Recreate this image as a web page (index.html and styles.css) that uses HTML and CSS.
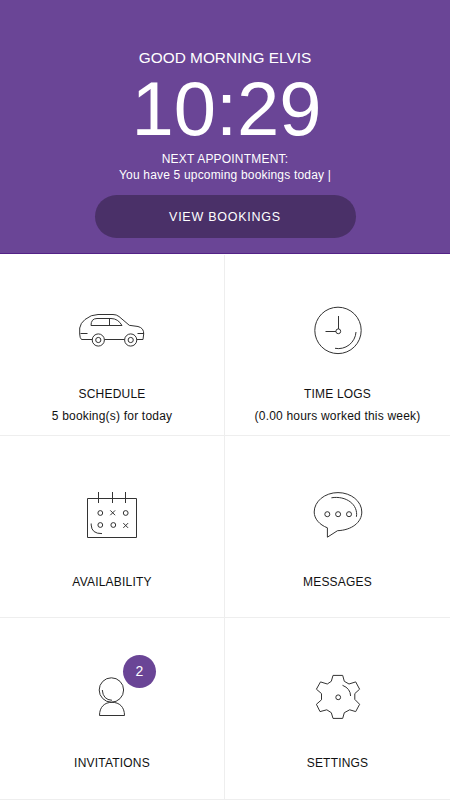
FILE: index.html
```html
<!DOCTYPE html>
<html lang="en">

<head>
    <meta charset="UTF-8">
    <title>Dashboard</title>
    <link rel="stylesheet" href="styles.css">
</head>

<body>
    <header>
        <h1>GOOD MORNING ELVIS</h1>
        <div class="clock">10:29</div>
        <p class="next">NEXT APPOINTMENT:</p>
        <p class="upcoming">You have 5 upcoming bookings today |</p>
        <button type="button">VIEW BOOKINGS</button>
    </header>

    <main>
        <section class="with-info">
            <svg viewBox="0 0 84 66">
                <path d="M22.2 42.5H11.5Q9.8 41 9.7 37V31Q10.5 26 15 22.5Q21 17.5 28 17.5H43Q46.5 17.5 49 19.5L59.3 28.3L68 29.5Q74 31 73.7 37L73 42.5H66.9M34.5 42.5H54.6" />
                <path d="M21 28.5Q21 21.5 27 21.5H41Q48 21.5 52 28.5ZM39.5 21.5V28.5M10.5 36.5H17.5M67.5 36.5H74" />
                <circle cx="28.3" cy="43" r="6.1" />
                <circle cx="28.3" cy="43" r="2.6" />
                <circle cx="60.7" cy="43" r="6.1" />
                <circle cx="60.7" cy="43" r="2.6" />
            </svg>
            <h2>SCHEDULE</h2>
            <p>5 booking(s) for today</p>
        </section>

        <section class="with-info">
            <svg viewBox="0 0 84 66">
                <circle cx="43" cy="33.4" r="23.2" />
                <circle cx="43.3" cy="34.3" r="2.4" />
                <path d="M43.5 19V32M30.5 34.5H41M61 35A17.7 17.7 0 0 1 40 51.3" />
            </svg>
            <h2>TIME LOGS</h2>
            <p>(0.00 hours worked this week)</p>
        </section>

        <section>
            <svg viewBox="0 0 84 66">
                <path d="M17.5 20.5H66.5V59.5H17.5ZM28.5 14V25M42.5 14V25M55.5 14V25" />
                <circle cx="30.3" cy="35" r="2.4" />
                <circle cx="55.7" cy="35" r="2.4" />
                <circle cx="30.3" cy="47" r="2.4" />
                <circle cx="43.3" cy="47" r="2.4" />
                <path d="M40.3 32.4L45.1 37.2M45.1 32.4L40.3 37.2M53.3 45.1L58.1 49.9M58.1 45.1L53.3 49.9" />
                <path d="M21.2 45.5V47Q21.5 55.8 32 55.6" />
            </svg>
            <h2>AVAILABILITY</h2>
        </section>

        <section>
            <svg viewBox="0 0 84 66">
                <path d="M32.4 49.8C24.5 46.8 19.2 40.8 19.2 34C19.2 23.4 29.8 14.6 43 14.6S66.8 23.4 66.8 34C66.8 44.5 56.5 52.2 42.5 52.7L32.4 59.2Z" />
                <path d="M36.4 19.8C51 17.4 63.5 26.5 61.4 38.8" />
                <circle cx="32.3" cy="36.2" r="2.5" />
                <circle cx="43.1" cy="36.2" r="2.5" />
                <circle cx="54" cy="36.2" r="2.5" />
            </svg>
            <h2>MESSAGES</h2>
        </section>

        <section class="last-row">
            <svg viewBox="0 0 84 66">
                <circle cx="41.4" cy="30" r="12.2" />
                <path d="M29.5 55.5C29.5 47 34.5 42.3 42 42.3S54.5 47 54.5 55.5Z" />
                <path d="M32.3 30Q33 39.8 42 40.3" />
            </svg>
            <span class="badge">2</span>
            <h2>INVITATIONS</h2>
        </section>

        <section class="last-row">
            <svg viewBox="0 0 84 66">
                <path d="M38 15.4H47.7L49.3 21.3L54 24L60.7 21.9L64.6 29.2L59.8 33.6V39.4L64.6 44.3L60.7 51.6L54.7 49.8L49.3 52.7L47.7 58.4H38L36.3 52.7L31.8 49.8L25 51.6L21.4 44.3L26.5 39.8V33.6L21.4 29.2L25.5 21.9L32.3 24L36.3 21.3Z" />
                <circle cx="43.2" cy="37.3" r="2.4" />
                <path d="M47.5 25.3Q55.5 28.5 55.6 36" />
            </svg>
            <h2>SETTINGS</h2>
        </section>
    </main>
</body>

</html>
```
FILE: styles.css
```css
body {
    margin: 0;
    font-family: "Liberation Sans", Arial, sans-serif;
    font-size: 12px;
    color: #111;
    background: #fff;
}

h1, h2, p {
    margin: 0;
    font-weight: normal;
}

header {
    box-sizing: border-box;
    height: 254px;
    padding-top: 48px;
    display: flex;
    flex-direction: column;
    align-items: center;
    color: #fff;
    background: #6a4596;
    border-bottom: 1px solid #532287;
}

h1 {
    font-size: 15.4px;
    line-height: 20px;
}

.clock {
    padding-left: 3px;
    font-size: 76px;
    line-height: 82px;
}

.next {
    line-height: 18px;
    letter-spacing: 0.2px;
}

.upcoming {
    line-height: 15px;
    letter-spacing: 0.18px;
}

button {
    width: 261px;
    height: 43px;
    margin-top: 12px;
    padding: 0;
    border: none;
    border-radius: 22px;
    font-family: inherit;
    font-size: 12.5px;
    letter-spacing: 0.75px;
    color: #fff;
    background: #4a3068;
}

main {
    display: grid;
    grid-template-columns: 225px 225px;
    grid-template-rows: 181px 182px 182px;
    margin-top: 1px;
}

section {
    position: relative;
    text-align: center;
    border-bottom: 1px solid #eee;
}

section:nth-child(odd) {
    border-right: 1px solid #eee;
}

section h2,
section p {
    font-size: 12px;
    line-height: 22px;
    letter-spacing: 0.2px;
}

svg {
    display: block;
    width: 84px;
    height: 66px;
    margin: 42px 0 27px 70px;
    fill: none;
    stroke: #333;
    stroke-width: 1;
}

.with-info svg {
    margin-bottom: 20px;
}

.last-row svg {
    margin-bottom: 26px;
}

.badge {
    position: absolute;
    top: 37px;
    left: 123px;
    width: 33px;
    height: 33px;
    border-radius: 50%;
    font-size: 14px;
    line-height: 33px;
    color: #fff;
    background: #6a4596;
}
```
